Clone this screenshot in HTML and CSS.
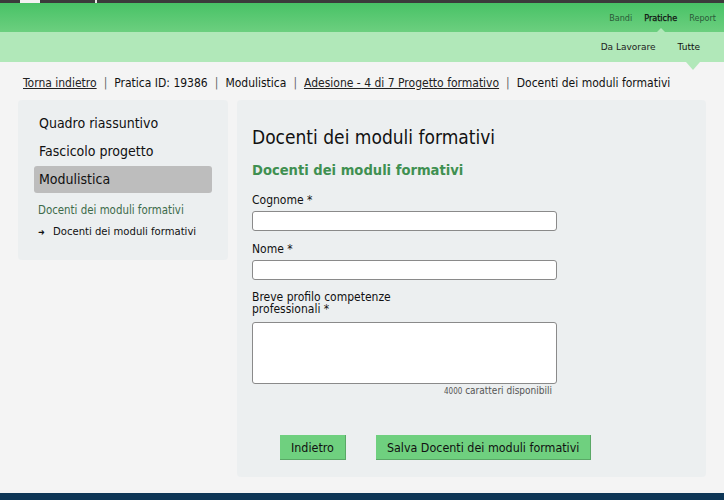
FILE: index.html
```html
<!DOCTYPE html>
<html lang="it">
<head>
<meta charset="utf-8">
<title>Docenti dei moduli formativi</title>
<link rel="stylesheet" href="styles.css">
</head>
<body>
<header class="header">
  <div class="topbar"><span class="topbar-tab"></span><span class="topbar-mark"></span></div>
  <nav class="nav-main">
    <a class="nav-link">Bandi</a>
    <a class="nav-link active">Pratiche</a>
    <a class="nav-link">Report</a>
  </nav>
  <nav class="nav-sub">
    <a class="sub-link">Da Lavorare</a>
    <a class="sub-link active">Tutte</a>
  </nav>
</header>
<div class="page">
  <div class="breadcrumb">
    <a class="crumb-link">Torna indietro</a><span class="sep">|</span><span>Pratica ID: 19386</span><span class="sep">|</span><span>Modulistica</span><span class="sep">|</span><a class="crumb-link">Adesione - 4 di 7 Progetto formativo</a><span class="sep">|</span><span>Docenti dei moduli formativi</span>
  </div>
  <div class="layout">
    <aside class="sidebar">
      <div class="side-item">Quadro riassuntivo</div>
      <div class="side-item">Fascicolo progetto</div>
      <div class="side-item selected">Modulistica</div>
      <div class="side-group">Docenti dei moduli formativi</div>
      <div class="side-sub"><span class="arrow">&#10140;</span>Docenti dei moduli formativi</div>
    </aside>
    <main class="content">
      <h1 class="title">Docenti dei moduli formativi</h1>
      <h2 class="subtitle">Docenti dei moduli formativi</h2>
      <form class="form">
        <label class="label">Cognome *</label>
        <input class="input" type="text">
        <label class="label">Nome *</label>
        <input class="input" type="text">
        <label class="label label-wrap">Breve profilo competenze professionali *</label>
        <textarea class="textarea"></textarea>
        <div class="counter"><span class="count">4000</span> caratteri disponibili</div>
        <div class="actions">
          <button type="button" class="btn">Indietro</button>
          <button type="button" class="btn">Salva Docenti dei moduli formativi</button>
        </div>
      </form>
    </main>
  </div>
</div>
<footer class="footer"></footer>
</body>
</html>
```
FILE: styles.css
```css
* { box-sizing: border-box; }
html, body { margin: 0; padding: 0; }
body {
  background: #f4f4f4;
  font-family: "DejaVu Sans", Verdana, sans-serif;
  font-stretch: condensed;
  color: #1a1a1a;
  width: 724px;
  height: 500px;
  overflow: hidden;
  display: flex;
  flex-direction: column;
}
.header { display: flex; flex-direction: column; }
.topbar {
  height: 3px;
  background: #3b3b3b;
  display: flex;
  padding-left: 20px;
}
.topbar-tab { width: 20px; height: 3px; background: #f2f2f2; }
.topbar-mark { width: 2px; height: 3px; background: #e8e8e8; margin-left: 55px; }
.nav-main {
  height: 29px;
  background: linear-gradient(#48c266, #6ccf7f);
  display: flex;
  justify-content: flex-end;
  align-items: center;
  gap: 12px;
  padding-right: 8px;
  font-size: 9px;
}
.nav-link { color: #2a5a38; position: relative; }
.nav-link.active { color: #111; -webkit-text-stroke: 0.25px #111; }
.nav-link.active::after {
  content: "";
  position: absolute;
  left: 50%;
  margin-left: -6px;
  bottom: -11px;
  border-left: 6px solid transparent;
  border-right: 6px solid transparent;
  border-bottom: 6px solid #b1e8b9;
}
.nav-sub {
  height: 30px;
  background: #b1e8b9;
  display: flex;
  justify-content: flex-end;
  align-items: center;
  gap: 22px;
  padding-right: 24px;
  font-size: 9px;
  font-stretch: normal;
}
.sub-link { color: #222; position: relative; }
.sub-link.active { color: #111; }
.sub-link.active::after {
  content: "";
  position: absolute;
  left: 50%;
  margin-left: -3px;
  top: 20px;
  border-left: 7px solid transparent;
  border-right: 7px solid transparent;
  border-top: 8px solid #b1e8b9;
}
.page { padding: 0 18px; flex: 1; }
.breadcrumb {
  height: 38px;
  display: flex;
  align-items: center;
  padding-left: 5px;
  padding-top: 4px;
  font-size: 12px;
  color: #111;
}
.crumb-link { text-decoration: underline; color: #222; }
.sep { margin: 0 7px; color: #666; }
.layout { display: flex; gap: 9px; align-items: flex-start; }
.sidebar {
  width: 210px;
  height: 160px;
  background: #eceff0;
  border-radius: 4px;
  padding: 9px 16px 0;
}
.side-item {
  height: 28px;
  line-height: 28px;
  padding-left: 5px;
  font-size: 14px;
  color: #111;
}
.side-item.selected { background: #bdbdbd; border-radius: 3px; height: 27px; line-height: 27px; margin-top: 1px; }
.side-group {
  margin-top: 10px;
  padding-left: 4px;
  font-size: 11.4px;
  color: #3d6b4a;
}
.side-sub {
  margin-top: 8px;
  padding-left: 4px;
  font-size: 11.2px;
  color: #111;
  display: flex;
  align-items: center;
}
.arrow { font-size: 9px; width: 15px; }
.content {
  width: 469px;
  height: 377px;
  background: #eceff0;
  border-radius: 4px;
  padding: 25px 15px 0;
}
.title {
  margin: 0;
  font-size: 19px;
  font-weight: normal;
  line-height: 24px;
  color: #111;
}
.subtitle {
  margin: 11px 0 0;
  font-size: 14.6px;
  font-weight: bold;
  line-height: 20px;
  color: #3f9051;
}
.form { display: flex; flex-direction: column; margin-top: 13px; }
.label { font-size: 12px; line-height: 14px; color: #111; margin-bottom: 4px; }
.label-wrap { width: 160px; line-height: 12px; margin-bottom: 7px; }
.input {
  width: 305px;
  height: 20px;
  border: 1px solid #8a8a8a;
  border-radius: 3px;
  background: #fff;
  margin-bottom: 11px;
}
.textarea {
  width: 305px;
  height: 62px;
  border: 1px solid #8a8a8a;
  border-radius: 3px;
  background: #fff;
  resize: none;
  margin: 0;
}
.counter {
  width: 300px;
  text-align: right;
  font-size: 10px;
  color: #555;
  margin-top: 1px;
}
.count { font-size: 8px; }
.actions { display: flex; gap: 30px; padding-left: 28px; margin-top: 39px; }
.btn {
  height: 25px;
  padding: 0 11px;
  background: #6fd07f;
  border: none;
  border-right: 1px solid #5aa866;
  border-bottom: 1px solid #5aa866;
  font-family: inherit;
  font-stretch: condensed;
  font-size: 12.4px;
  color: #111;
}
.footer { height: 7px; background: #0e3656; margin-top: auto; }
```
